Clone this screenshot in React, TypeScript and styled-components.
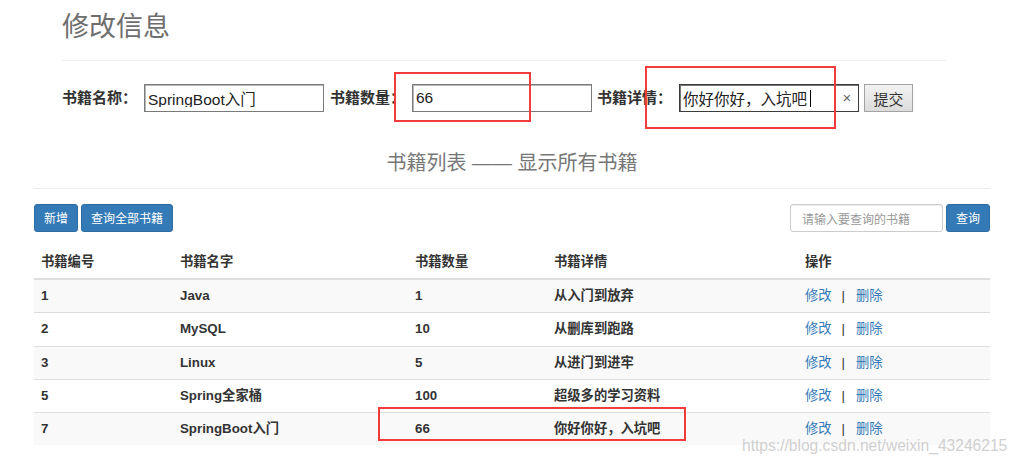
import React from 'react'
import styled, { createGlobalStyle } from 'styled-components'

const GlobalStyle = createGlobalStyle`
	html, body {
		margin: 0;
		padding: 0;
		background: #fff;
	}
	body {
		font-family: 'Liberation Sans', 'Noto Sans CJK SC', sans-serif;
		color: #333;
	}
`

const Page = styled.div`
	position: relative;
	width: 1023px;
	height: 464px;
	overflow: hidden;
`

const EditSection = styled.section`
	width: 884px;
	padding-left: 62px;
`

const Title = styled.h2`
	margin: 0;
	padding-top: 9px;
	height: 51px;
	font-size: 27px;
	line-height: 36px;
	font-weight: 400;
	color: #6e6e6e;
	border-bottom: 1px solid #eee;
`

const EditForm = styled.form`
	display: flex;
	align-items: center;
	margin-top: 23px;
	height: 28px;
`

const Label = styled.label`
	width: 82px;
	flex-shrink: 0;
	font-size: 15px;
	font-weight: 700;
	color: #333;
	line-height: 28px;
`

const Field = styled.div<{ focused?: boolean; gap?: number }>`
	display: flex;
	align-items: center;
	box-sizing: border-box;
	width: 180px;
	height: 28px;
	margin-right: ${({ gap }) => gap ?? 6}px;
	border: 1px solid ${({ focused }) => (focused ? '#3c3c3c' : '#7a7a7a')};
	box-shadow: inset 1px 1px 0 ${({ focused }) => (focused ? '#777' : '#b8b8b8')};
	background: #fff;
`

const FieldInput = styled.input`
	flex: 1;
	min-width: 0;
	border: 0;
	outline: none;
	padding: 0 3px;
	background: transparent;
	font-family: 'Liberation Sans', 'Noto Sans CJK SC', sans-serif;
	font-size: 15.5px;
	color: #222;
`

const Caret = styled.span`
	width: 1px;
	height: 17px;
	background: #000;
	margin-left: -26px;
	margin-right: 25px;
`

const Clear = styled.span`
	width: 22px;
	text-align: center;
	font-size: 15px;
	color: #666;
	line-height: 26px;
`

const SubmitButton = styled.button`
	box-sizing: border-box;
	width: 49px;
	height: 28px;
	padding: 0;
	border: 1px solid #a3a3a3;
	border-radius: 0;
	background: linear-gradient(#f2f2f2, #dcdcdc);
	font-family: 'Noto Sans CJK SC', sans-serif;
	font-size: 15px;
	color: #333;
`

const ListSection = styled.section`
	width: 956px;
	margin: 0 0 0 34px;
`

const ListHeader = styled.h3`
	margin: 0;
	margin-top: 36px;
	padding-bottom: 10px;
	text-align: center;
	font-size: 20px;
	line-height: 30px;
	font-weight: 400;
	color: #777;
	border-bottom: 1px solid #eee;
`

const Toolbar = styled.div`
	display: flex;
	align-items: center;
	gap: 3px;
	margin-top: 15px;
	height: 28px;
`

const Spacer = styled.div`
	flex: 1;
`

const PrimaryButton = styled.button`
	box-sizing: border-box;
	height: 28px;
	padding: 0 9px;
	border: 1px solid #2e6da4;
	border-radius: 3px;
	background: #337ab7;
	color: #fff;
	font-family: 'Noto Sans CJK SC', sans-serif;
	font-size: 12px;
	line-height: 26px;
`

const SearchInput = styled.input`
	box-sizing: border-box;
	width: 153px;
	height: 28px;
	padding: 0 11px;
	border: 1px solid #ccc;
	border-radius: 3px;
	box-shadow: inset 0 1px 1px rgba(0, 0, 0, 0.075);
	font-family: 'Noto Sans CJK SC', sans-serif;
	font-size: 12px;
	outline: none;

	&::placeholder {
		color: #999;
	}
`

const Table = styled.table`
	width: 100%;
	margin-top: 14px;
	border-collapse: collapse;
	border-spacing: 0;
	font-size: 13.3px;
`

const HeadCell = styled.th<{ w: number }>`
	width: ${({ w }) => w}px;
	box-sizing: border-box;
	padding: 7px;
	line-height: 18px;
	text-align: left;
	font-weight: 700;
	color: #333;
	border-bottom: 2px solid #ddd;
`

const Row = styled.tr`
	&:nth-child(odd) {
		background: #f9f9f9;
	}
`

const Cell = styled.td<{ bold?: boolean }>`
	padding: 7px;
	height: 18.3px;
	line-height: 18px;
	border-top: 1px solid #ddd;
	font-weight: ${({ bold }) => (bold ? 700 : 400)};
	color: #333;
`

const Link = styled.a`
	color: #337ab7;
	text-decoration: none;
	font-size: 13.3px;
`

const Divider = styled.span`
	margin: 0 11px 0 10px;
	color: #333;
`

const Mark = styled.div<{ x: number; y: number; w: number; h: number }>`
	position: absolute;
	left: ${({ x }) => x}px;
	top: ${({ y }) => y}px;
	width: ${({ w }) => w}px;
	height: ${({ h }) => h}px;
	box-sizing: border-box;
	border: 2px solid #f23b3b;
	pointer-events: none;
`

const Watermark = styled.div`
	position: absolute;
	left: 742px;
	top: 437px;
	font-family: 'Liberation Sans', sans-serif;
	font-size: 15.6px;
	color: #cfcfcf;
	text-shadow: 0 0 1px #fff;
	white-space: nowrap;
`

const columns = [
	{ title: '书籍编号', w: 139 },
	{ title: '书籍名字', w: 235 },
	{ title: '书籍数量', w: 139 },
	{ title: '书籍详情', w: 251 },
	{ title: '操作', w: 192 },
]

const books = [
	{ id: 1, name: 'Java', count: 1, detail: '从入门到放弃' },
	{ id: 2, name: 'MySQL', count: 10, detail: '从删库到跑路' },
	{ id: 3, name: 'Linux', count: 5, detail: '从进门到进牢' },
	{ id: 5, name: 'Spring全家桶', count: 100, detail: '超级多的学习资料' },
	{ id: 7, name: 'SpringBoot入门', count: 66, detail: '你好你好，入坑吧' },
]

export default function App() {
	return (
		<Page>
			<GlobalStyle />
			<EditSection>
				<Title>修改信息</Title>
				<EditForm onSubmit={(e) => e.preventDefault()}>
					<Label>书籍名称：</Label>
					<Field>
						<FieldInput defaultValue="SpringBoot入门" />
					</Field>
					<Label>书籍数量：</Label>
					<Field gap={5}>
						<FieldInput defaultValue="66" />
					</Field>
					<Label>书籍详情：</Label>
					<Field focused gap={5}>
						<FieldInput defaultValue="你好你好，入坑吧" />
						<Caret />
						<Clear>×</Clear>
					</Field>
					<SubmitButton type="submit">提交</SubmitButton>
				</EditForm>
			</EditSection>

			<ListSection>
				<ListHeader>书籍列表 —— 显示所有书籍</ListHeader>
				<Toolbar>
					<PrimaryButton>新增</PrimaryButton>
					<PrimaryButton>查询全部书籍</PrimaryButton>
					<Spacer />
					<SearchInput placeholder="请输入要查询的书籍" />
					<PrimaryButton>查询</PrimaryButton>
				</Toolbar>
				<Table>
					<thead>
						<tr>
							{columns.map((c) => (
								<HeadCell key={c.title} w={c.w}>
									{c.title}
								</HeadCell>
							))}
						</tr>
					</thead>
					<tbody>
						{books.map((b) => (
							<Row key={b.id}>
								<Cell bold>{b.id}</Cell>
								<Cell bold>{b.name}</Cell>
								<Cell bold>{b.count}</Cell>
								<Cell bold>{b.detail}</Cell>
								<Cell>
									<Link href="#">修改</Link>
									<Divider>|</Divider>
									<Link href="#">删除</Link>
								</Cell>
							</Row>
						))}
					</tbody>
				</Table>
			</ListSection>

			<Mark x={394} y={72} w={137} h={50} />
			<Mark x={645} y={66} w={191} h={63} />
			<Mark x={378} y={407} w={308} h={34} />
			<Watermark>https://blog.csdn.net/weixin_43246215</Watermark>
		</Page>
	)
}
